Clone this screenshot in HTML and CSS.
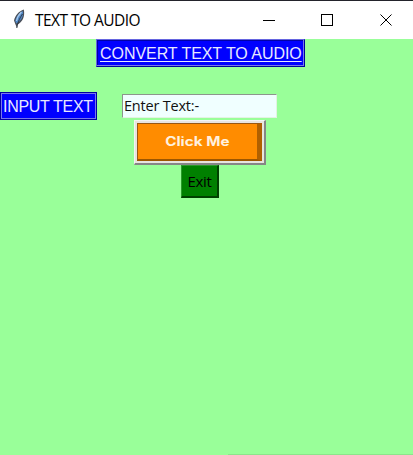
FILE: index.html
```html
<!DOCTYPE html>
<html lang="en">
<head>
<meta charset="utf-8">
<title>TEXT TO AUDIO</title>
<link rel="stylesheet" href="styles.css">
</head>
<body>
<header class="titlebar">
  <svg class="feather" width="12" height="20" viewBox="0 0 12 20">
    <path d="M10.800 0.500C6 2 2 6.500 1 11.500L2.500 15.500L4 19L4.600 15.500C9 13.500 12.300 8 10.800.5Z" fill="#4a4f58"/>
    <path d="M9.800 2C6 4 3 8 2.200 12L3.300 14.500C8 12 11 7 9.800 2Z" fill="#4f86c4"/>
    <path d="M8.500 3C6 5.500 4 9 3.500 12" stroke="#a5c8ec" stroke-width="1.300" fill="none"/>
    <path d="M9.500 5C7.500 8 5 12 3.800 19" stroke="#29313d" stroke-width=".9" fill="none"/>
  </svg>
  <span class="caption">TEXT TO AUDIO</span>
  <svg class="controls" width="132" height="12" viewBox="0 0 132 12" fill="none" stroke="#000" shape-rendering="crispEdges">
    <path d="M0 6.500H12M58.500.5H69.500V11.500H58.500Z"/>
    <path d="M117.500.5L128.500 11.500M128.500.5L117.500 11.500" shape-rendering="auto"/>
  </svg>
</header>
<main class="window">
  <h1 class="label heading"><span class="heading-text">CONVERT TEXT TO AUDIO</span></h1>
  <div class="row">
    <div class="label prompt"><span class="prompt-text">INPUT TEXT</span></div>
    <div class="entry"><span class="entry-text">Enter Text:-</span></div>
  </div>
  <button class="click"><span class="face"><span class="face-text">Click Me</span></span></button>
  <button class="exit"><span class="exit-text">Exit</span></button>
</main>
</body>
</html>
```
FILE: styles.css
```css
* { box-sizing: border-box; }
body {
  margin: 0;
  width: 413px;
  height: 455px;
  overflow: hidden;
  display: flex;
  flex-direction: column;
  background: #9f9;
  font-family: "Liberation Sans", sans-serif;
}
.titlebar {
  flex: none;
  height: 39px;
  display: flex;
  align-items: center;
  padding-left: 13px;
  background: #fff;
  border-top: 1px solid #23232b;
}
.feather { margin-top: -2px; }
.caption {
  margin: -1px 0 0 10px;
  width: 228px;
  font: 15.5px/20px "Open Sans", sans-serif;
  letter-spacing: -0.54px;
  white-space: nowrap;
  color: #000;
}
.controls { flex: none; }
.window {
  flex: 1;
  display: flex;
  flex-direction: column;
  align-items: flex-start;
  background: linear-gradient(#8be58b, #8be58b) right bottom / 185px 1px no-repeat;
}
.label {
  display: flex;
  align-items: center;
  height: 28px;
  margin: 0;
  padding-top: 2px;
  background: #00f;
  border: 1px solid;
  border-color: #6666e0 #0000a0 #0000a0 #6666e0;
  box-shadow: inset -1px -1px #7777e8, inset 1px 1px #0000a8;
  font-size: 16px;
  font-weight: 400;
  line-height: 18px;
  letter-spacing: -0.05px;
  white-space: nowrap;
  color: #e8e8ff;
}
.heading { width: 209px; margin-left: 96px; padding-left: 3px; }
.heading-text {
  text-decoration: underline;
  text-decoration-thickness: 1px;
  text-underline-offset: 2px;
}
.row { display: flex; align-items: center; height: 28px; margin-top: 25px; }
.prompt {
  width: 97px;
  padding-left: 2px;
  letter-spacing: -0.3px;
  border-color: #0000a0;
  box-shadow: inset 0 0 0 1px #7777e8;
}
.entry {
  width: 155px;
  height: 24px;
  margin-left: 25px;
  padding-left: 1px;
  background: #f0ffff;
  border: 1px solid;
  border-color: #8c968c #e3f3e3 #e3f3e3 #8c968c;
  font: 14.5px/22px "Open Sans", sans-serif;
  letter-spacing: -0.2px;
  color: #111;
}
.click {
  width: 132px;
  height: 45px;
  margin: 0 0 0 134px;
  padding: 1px;
  border: 2px solid;
  border-color: #f4f4f4 #868686 #868686 #f4f4f4;
  border-width: 1px 2px 2px 1px;
  background: #e8e4df;
}
.face {
  display: flex;
  align-items: center;
  justify-content: center;
  width: 125px;
  height: 38px;
  margin: 1px;
  padding: 1px 0 0;
  background: #ff8c00;
  border: 1px solid;
  border-color: #975713 #b06000 #9c5600 #975713;
  border-width: 1px 5px 2px 1px;
  color: #fff1df;
}
.face-text {
  font: 700 12.5px/16px Inter, sans-serif;
  transform: scaleX(1.22);
  white-space: nowrap;
}
.exit {
  width: 38px;
  height: 33px;
  margin: 0 0 0 181px;
  padding: 0;
  background: #008000;
  border: 2px solid;
  border-color: #2c9a2c #004000 #004000 #2c9a2c;
  border-width: 1px 2px 2px 1px;
  font: 15px/18px "Open Sans", sans-serif;
  letter-spacing: -0.3px;
  color: #000;
}
```
